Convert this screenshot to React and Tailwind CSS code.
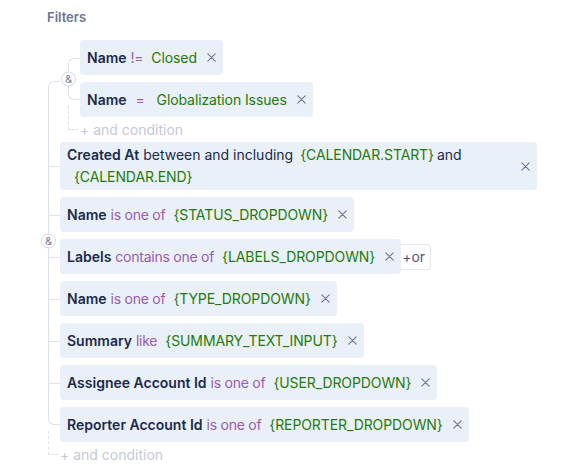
import React from "react";

const LINE = "border-[#dde1ea]";

function Conn({ pos }) {
  if (pos === "first") {
    return (
      <span className={`absolute -left-[12px] top-1/2 -bottom-[7px] w-[12px] border-l border-t ${LINE} rounded-tl-[6px]`} />
    );
  }
  if (pos === "groupFirst") {
    return (
      <span className={`absolute -left-[12px] top-[41px] -bottom-[7px] w-[12px] border-l border-t ${LINE} rounded-tl-[6px]`} />
    );
  }
  if (pos === "last") {
    return (
      <span className={`absolute -left-[12px] top-0 h-1/2 w-[12px] border-l border-b ${LINE} rounded-bl-[6px]`} />
    );
  }
  return (
    <>
      <span className={`absolute -left-[12px] top-0 -bottom-[7px] border-l ${LINE}`} />
      <span className={`absolute -left-[12px] top-1/2 w-[12px] border-t ${LINE}`} />
    </>
  );
}

function Close() {
  return (
    <svg width="9" height="9" viewBox="0 0 9 9" className="ml-[10px] shrink-0">
      <path d="M0.8 0.8 L8.2 8.2 M8.2 0.8 L0.8 8.2" stroke="#707391" strokeWidth="1.1" strokeLinecap="round" />
    </svg>
  );
}

function Chip({ children, className = "" }) {
  return (
    <div className={`flex min-h-[35px] items-center rounded-[4px] bg-[#eaf0f7] pl-[7px] pr-[7px] ${className}`}>
      <div className="py-[2px] leading-[22px]">{children}</div>
      <Close />
    </div>
  );
}

const Field = ({ children }) => <span className="font-semibold text-[#1b2a4e]">{children}</span>;
const Op = ({ children, className = "ml-[4px]" }) => (
  <span className={`${className} tracking-[-0.25px] text-[#9a5cb0]`}>{children}</span>
);
const Val = ({ children, className = "ml-[8px]" }) => (
  <span className={`${className} tracking-[-0.1px] text-[#257a0c]`}>{children}</span>
);

function Row({ pos, children }) {
  return (
    <div className="relative flex w-fit items-center">
      <Conn pos={pos} />
      {children}
    </div>
  );
}

function Badge() {
  return (
    <span className="absolute -left-[19px] top-1/2 z-10 flex h-[15px] w-[15px] -translate-y-1/2 items-center justify-center rounded-full border border-[#d6dae4] bg-white text-[11px] leading-none text-[#6b7496]">
      &amp;
    </span>
  );
}

function AndCondition() {
  return (
    <div className="relative mt-[8px] h-[10px] text-[14px] leading-[10px] text-[#c3c8da]">
      <span className={`absolute -left-[12px] -top-[19px] h-[24px] w-[10px] border-l border-b border-dashed ${LINE}`} />
      + and condition
    </div>
  );
}

export default function App() {
  return (
    <div
      className="min-h-screen bg-white pl-[47px] pt-[7px] text-[14px]"
      style={{ fontFamily: "Inter, 'Noto Sans', sans-serif" }}
    >
      <div className="text-[13px] font-semibold leading-[20px] text-[#6b7496]">Filters</div>

      <div className="ml-[13px] mt-[13px]">
        <div className="relative flex flex-col gap-[7px]">
          <Badge />

          <div className="relative pl-[20px]">
            <Conn pos="groupFirst" />
            <div className="relative flex flex-col gap-[7px]">
              <Badge />
              <Row pos="first">
                <Chip>
                  <Field>Name</Field>
                  <Op>!=</Op>
                  <Val className="ml-[8px]">Closed</Val>
                </Chip>
              </Row>
              <Row pos="last">
                <Chip>
                  <Field>Name</Field>
                  <Op className="ml-[9px]">=</Op>
                  <Val className="ml-[12px]">Globalization Issues</Val>
                </Chip>
              </Row>
            </div>
            <AndCondition />
          </div>

          <Row pos="mid">
            <div className="flex w-[477px] items-center justify-between rounded-[4px] bg-[#eaf0f7] pl-[7px] pr-[7px]">
              <div className="py-[2px] leading-[22px]">
                <Field>Created At</Field>
                <span className="ml-[4px] text-[#1b2a4e]">between and including</span>
                <Val className="ml-[7px]">{"{CALENDAR.START}"}</Val>
                <span className="ml-[3px] text-[#1b2a4e]">and</span>
                <br />
                <Val className="ml-[7px]">{"{CALENDAR.END}"}</Val>
              </div>
              <Close />
            </div>
          </Row>

          <Row pos="mid">
            <Chip>
              <Field>Name</Field>
              <Op>is one of</Op>
              <Val>{"{STATUS_DROPDOWN}"}</Val>
            </Chip>
          </Row>

          <Row pos="mid">
            <Chip>
              <Field>Labels</Field>
              <Op>contains one of</Op>
              <Val>{"{LABELS_DROPDOWN}"}</Val>
            </Chip>
            <button className="flex h-[26px] items-center rounded-r-[4px] border-y border-r border-[#e4e7ee] pl-[1px] pr-[5px] text-[14px] text-[#4f5578]">
              +or
            </button>
          </Row>

          <Row pos="mid">
            <Chip>
              <Field>Name</Field>
              <Op>is one of</Op>
              <Val>{"{TYPE_DROPDOWN}"}</Val>
            </Chip>
          </Row>

          <Row pos="mid">
            <Chip>
              <Field>Summary</Field>
              <Op>like</Op>
              <Val>{"{SUMMARY_TEXT_INPUT}"}</Val>
            </Chip>
          </Row>

          <Row pos="mid">
            <Chip>
              <Field>Assignee Account Id</Field>
              <Op>is one of</Op>
              <Val>{"{USER_DROPDOWN}"}</Val>
            </Chip>
          </Row>

          <Row pos="last">
            <Chip>
              <Field>Reporter Account Id</Field>
              <Op>is one of</Op>
              <Val>{"{REPORTER_DROPDOWN}"}</Val>
            </Chip>
          </Row>
        </div>
        <AndCondition />
      </div>
    </div>
  );
}
